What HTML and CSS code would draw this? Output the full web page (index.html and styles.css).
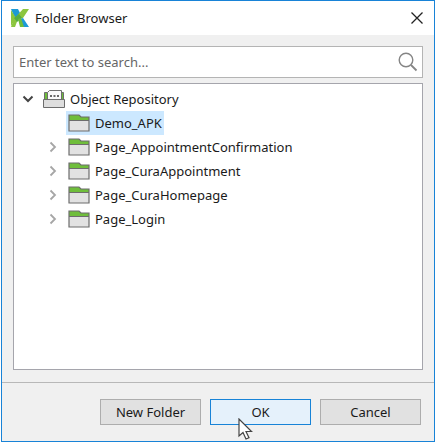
FILE: index.html
```html
<!DOCTYPE html>
<html lang="en">
<head>
<meta charset="utf-8">
<title>Folder Browser</title>
<link rel="stylesheet" href="styles.css">
</head>
<body>
<svg hidden>
  <symbol id="folder" viewBox="0 0 22 18">
    <path d="M1 1h10l2 2h8v4H1z" fill="#6fbe3b"/>
    <path d="M1 6.500h20V17H1z" fill="#e2e2e2"/>
    <path d="M1 1h10l2 2h8v14H1zM1 6.500h20" fill="none" stroke="#6d6d6d" stroke-width="1.2"/>
  </symbol>
  <symbol id="collapsed" viewBox="0 0 12 12">
    <path d="M3.500 1.500L8 6l-4.500 4.500" fill="none" stroke="#a6a6a6" stroke-width="1.8"/>
  </symbol>
</svg>
<main class="window">
  <header class="titlebar">
    <svg class="logo" viewBox="0 0 18 18" aria-hidden="true">
      <path d="M0 0h7l3 6-5 6z" fill="#1c9ad6"/>
      <path d="M0 1l5 8-5 8z" fill="#8cc63f"/>
      <path d="M0 18l3-8L12 0h6l-6 9-5 1-3 8z" fill="#8cc63f"/>
      <path d="M3 9l5-4 3 4-5 4z" fill="#55ad45"/>
      <path d="M9 10l3-1 6 9h-6z" fill="#1c9ad6"/>
      <path d="M7 10l3-1 3 9H9z" fill="#6fbe3b"/>
    </svg>
    <h1 class="title">Folder Browser</h1>
    <button class="close" aria-label="Close">
      <svg viewBox="0 0 12 12"><path d="M.5.5l11 11M11.500.5l-11 11" fill="none" stroke="#222" stroke-width="1.3"/></svg>
    </button>
  </header>
  <section class="content">
    <div class="search">
      <input type="text" placeholder="Enter text to search..." aria-label="Search">
      <svg class="glass" viewBox="0 0 20 20" aria-hidden="true"><circle cx="8" cy="8" r="6.800" fill="none" stroke="#858585" stroke-width="1.400"/><path d="M13 13l5.500 5.500" stroke="#858585" stroke-width="1.800"/></svg>
    </div>
    <ul class="tree" role="tree">
      <li class="row root" role="treeitem" aria-expanded="true">
        <svg class="arrow" viewBox="0 0 12 12"><path d="M1.500 3.500L6 8l4.500-4.500" fill="none" stroke="#444" stroke-width="2"/></svg>
        <span class="item">
          <svg class="icon" viewBox="0 0 22 18">
            <path d="M1.500 11V2.500h19V11z" fill="#6fbe3b" stroke="#6d6d6d"/>
            <path d="M4.500 11V2.500l2-2h12V11z" fill="#f8f8f8" stroke="#6d6d6d"/>
            <path d="M7 6h2m1.500 0h2m1.500 0h2" stroke="#666" stroke-width="2"/>
            <path d="M.5 9.500h21v8H.5z" fill="#dedede" stroke="#6d6d6d"/>
          </svg>
          <span>Object Repository</span>
        </span>
      </li>
      <li class="row" role="treeitem" aria-selected="true">
        <span class="arrow"></span>
        <span class="item selected"><svg class="icon"><use href="#folder"/></svg><span>Demo_APK</span></span>
      </li>
      <li class="row" role="treeitem" aria-expanded="false">
        <svg class="arrow"><use href="#collapsed"/></svg>
        <span class="item"><svg class="icon"><use href="#folder"/></svg><span>Page_AppointmentConfirmation</span></span>
      </li>
      <li class="row" role="treeitem" aria-expanded="false">
        <svg class="arrow"><use href="#collapsed"/></svg>
        <span class="item"><svg class="icon"><use href="#folder"/></svg><span>Page_CuraAppointment</span></span>
      </li>
      <li class="row" role="treeitem" aria-expanded="false">
        <svg class="arrow"><use href="#collapsed"/></svg>
        <span class="item"><svg class="icon"><use href="#folder"/></svg><span>Page_CuraHomepage</span></span>
      </li>
      <li class="row" role="treeitem" aria-expanded="false">
        <svg class="arrow"><use href="#collapsed"/></svg>
        <span class="item"><svg class="icon"><use href="#folder"/></svg><span>Page_Login</span></span>
      </li>
    </ul>
  </section>
  <footer class="actions">
    <button class="button">New Folder</button>
    <button class="button primary">OK
      <svg class="cursor" viewBox="0 0 15 22" aria-hidden="true"><path d="M1 1v17l4-3.500 3 6.500 3-1.300-3-6.200h5.500z" fill="#fff" stroke="#444" stroke-width="1.200"/></svg>
    </button>
    <button class="button">Cancel</button>
  </footer>
</main>
</body>
</html>
```
FILE: styles.css
```css
* {
  box-sizing: border-box;
}

body {
  margin: 0;
  min-height: 100vh;
  padding: 0 4px 2px 1px;
  display: flex;
  background: #fff;
  color: #1a1a1a;
  font: 13px/18px "Noto Sans", "Open Sans", sans-serif;
}

button,
input {
  font: inherit;
  color: inherit;
}

svg {
  display: block;
}

svg[hidden] {
  display: none;
}

.window {
  flex: 1;
  display: flex;
  flex-direction: column;
  border: 1px solid #1883d7;
  background: #f0f0f0;
}

.titlebar {
  display: flex;
  align-items: center;
  gap: 6px;
  height: 34px;
  padding: 0 11px 0 9px;
  background: #fff;
}

.logo {
  width: 18px;
  height: 18px;
}

.title {
  flex: 1;
  margin: 0;
  font-size: 13px;
  font-weight: 400;
}

.close {
  padding: 0;
  border: 0;
  background: none;
}

.close svg {
  width: 12px;
  height: 12px;
}

.content {
  flex: 1;
  display: flex;
  flex-direction: column;
  gap: 5px;
  padding: 11px 11px 12px;
}

.search {
  display: flex;
  align-items: center;
  height: 32px;
  padding: 0 4px 0 5px;
  border: 1px solid #b4b4b4;
  background: #fff;
}

.search input {
  flex: 1;
  min-width: 0;
  padding: 0;
  border: 0;
  outline: 0;
  background: none;
}

.search input::placeholder {
  color: #666;
  opacity: 1;
}

.glass {
  width: 20px;
  height: 20px;
}

.tree {
  flex: 1;
  margin: 0;
  padding: 3px 8px;
  border: 1px solid #a5a5ac;
  background: #fff;
  list-style: none;
}

.row {
  display: flex;
  gap: 7px;
  align-items: center;
  height: 24px;
  padding-left: 25px;
}

.root {
  padding-left: 0;
}

.arrow {
  width: 12px;
  height: 12px;
}

.item {
  display: flex;
  align-items: center;
  gap: 5px;
  height: 24px;
  padding: 0 2px;
}

.selected {
  background: #cce8ff;
}

.icon {
  width: 22px;
  height: 18px;
}

.actions {
  display: flex;
  justify-content: flex-end;
  gap: 9px;
  padding: 16px 13px;
  border-top: 1px solid #b8b8b8;
}

.button {
  position: relative;
  width: 101px;
  height: 26px;
  padding: 0;
  border: 1px solid #adadad;
  background: #e1e1e1;
}

.button.primary {
  border: 1px solid #1883d7;
  background: #e5f1fb;
}

.cursor {
  position: absolute;
  left: 27px;
  top: 18px;
  width: 15px;
  height: 22px;
}
```
